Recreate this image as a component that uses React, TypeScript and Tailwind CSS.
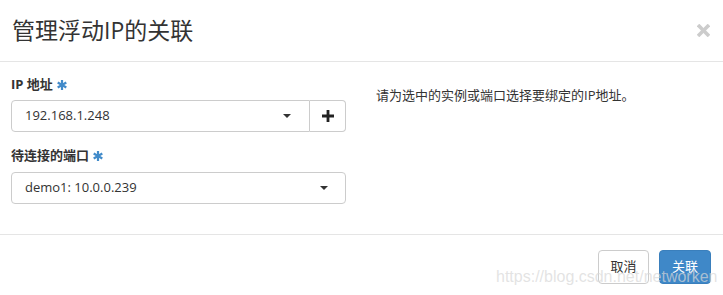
import React from "react";

const font = { fontFamily: '"Open Sans", "Noto Sans CJK SC", sans-serif' };

function Asterisk() {
    return (
        <svg width="10" height="10" viewBox="0 0 10 10" className="ml-[4px] inline-block">
            <g stroke="#428bca" strokeWidth="2.2" strokeLinecap="butt">
                <line x1="5" y1="0" x2="5" y2="10" />
                <line x1="0.7" y1="2.5" x2="9.3" y2="7.5" />
                <line x1="0.7" y1="7.5" x2="9.3" y2="2.5" />
            </g>
        </svg>
    );
}

function Caret() {
    return (
        <svg width="8" height="4" viewBox="0 0 8 4">
            <path d="M0 0 L8 0 L4 4 Z" fill="#333" />
        </svg>
    );
}

export default function App() {
    return (
        <div className="relative w-[723px] h-[295px] bg-white text-[#333] overflow-hidden" style={font}>
            {/* header */}
            <div className="h-[62px] border-b border-[#e5e5e5] flex items-center justify-between pl-[12px] pr-[13px]">
                <h4 className="text-[23px] leading-none font-normal">管理浮动IP的关联</h4>
                <svg width="13" height="13" viewBox="0 0 13 13">
                    <g stroke="#cccccc" strokeWidth="3.6">
                        <line x1="1" y1="1" x2="12" y2="12" />
                        <line x1="12" y1="1" x2="1" y2="12" />
                    </g>
                </svg>
            </div>

            {/* body */}
            <div className="flex px-[11px] pt-[14px] pb-[30px] gap-[30px]">
                <div className="w-[335px] text-[13px]">
                    <label className="flex items-center h-[18px] font-bold mb-[6px]">
                        IP 地址<Asterisk />
                    </label>
                    <div className="flex h-[32px]">
                        <div className="flex-1 flex items-center justify-between border border-[#ccc] rounded-l-[4px] pl-[13px] pr-[18px]">
                            <span>192.168.1.248</span>
                            <Caret />
                        </div>
                        <button className="w-[36px] flex items-center justify-center border border-l-0 border-[#ccc] rounded-r-[4px] bg-white">
                            <svg width="12" height="12" viewBox="0 0 12 12">
                                <path d="M4.6 0h2.8v4.6H12v2.8H7.4V12H4.6V7.4H0V4.6h4.6z" fill="#222" />
                            </svg>
                        </button>
                    </div>
                    <label className="flex items-center h-[18px] font-bold mt-[15px] mb-[7px]">
                        待连接的端口<Asterisk />
                    </label>
                    <div className="h-[32px] flex items-center justify-between border border-[#ccc] rounded-[4px] pl-[13px] pr-[17px]">
                        <span>demo1: 10.0.0.239</span>
                        <Caret />
                    </div>
                </div>
                <div className="text-[13px] pt-[10px]">
                    <p className="leading-[18px]">请为选中的实例或端口选择要绑定的IP地址。</p>
                </div>
            </div>

            {/* footer */}
            <div className="border-t border-[#e5e5e5] flex justify-end gap-[10px] pt-[15px] pr-[12px]">
                <button className="h-[34px] w-[51px] border border-[#ccc] rounded-[4px] text-[13px] bg-white text-[#333]">
                    取消
                </button>
                <button className="h-[34px] w-[52px] border border-[#3a7fbc] rounded-[4px] text-[13px] bg-[#3f88c8] text-white">
                    关联
                </button>
            </div>

            <div
                className="absolute left-[496px] top-[268px] text-[16px] leading-[18px] text-[rgba(215,215,215,0.7)] whitespace-nowrap pointer-events-none"
                style={{ fontFamily: '"Liberation Sans", sans-serif' }}
            >
                https://blog.csdn.net/networken
            </div>
        </div>
    );
}
